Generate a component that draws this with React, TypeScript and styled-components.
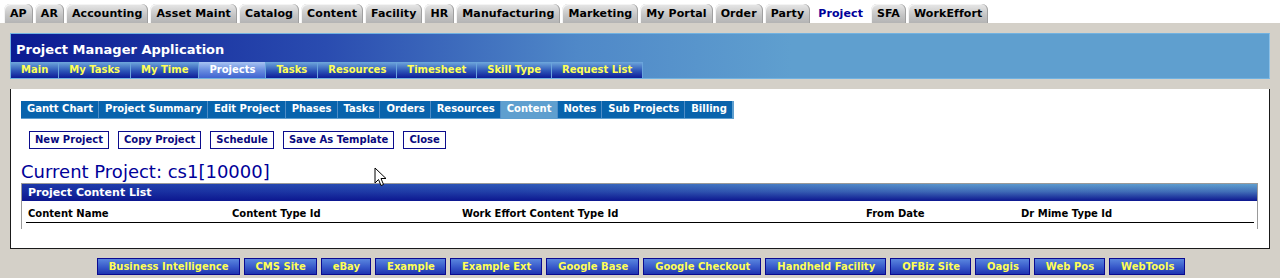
import React from 'react'
import styled, { createGlobalStyle } from 'styled-components'

const appTabs = [
  'AP', 'AR', 'Accounting', 'Asset Maint', 'Catalog', 'Content', 'Facility', 'HR',
  'Manufacturing', 'Marketing', 'My Portal', 'Order', 'Party', 'Project', 'SFA', 'WorkEffort',
]
const mainNav = ['Main', 'My Tasks', 'My Time', 'Projects', 'Tasks', 'Resources', 'Timesheet', 'Skill Type', 'Request List']
const subTabs = [
  'Gantt Chart', 'Project Summary', 'Edit Project', 'Phases', 'Tasks', 'Orders',
  'Resources', 'Content', 'Notes', 'Sub Projects', 'Billing',
]
const actions = ['New Project', 'Copy Project', 'Schedule', 'Save As Template', 'Close']
const columns = ['Content Name', 'Content Type Id', 'Work Effort Content Type Id', 'From Date', 'Dr Mime Type Id']
const footerLinks = [
  'Business Intelligence', 'CMS Site', 'eBay', 'Example', 'Example Ext', 'Google Base',
  'Google Checkout', 'Handheld Facility', 'OFBiz Site', 'Oagis', 'Web Pos', 'WebTools',
]

const GlobalStyle = createGlobalStyle`
  html, body {
    margin: 0;
    padding: 0;
    background: #d4d0c8;
    font-family: "DejaVu Sans", Verdana, sans-serif;
    overflow: hidden;
  }
`

const Page = styled.div`
  position: relative;
  width: 1280px;
  height: 278px;
`

const TabBar = styled.div`
  display: flex;
  align-items: flex-end;
  height: 23px;
  padding-left: 4px;
  background: #ffffff;
`

const AppTab = styled.div<{ $active?: boolean }>`
  height: 19px;
  line-height: 20px;
  padding: 0 6px;
  margin-right: 2px;
  font-size: 11px;
  font-weight: bold;
  letter-spacing: 0.1px;
  white-space: nowrap;
  border-radius: 6px 6px 0 0;
  color: ${(p) => (p.$active ? '#000099' : '#000000')};
  background: ${(p) => (p.$active ? '#ffffff' : 'linear-gradient(to bottom, #e8e8e8, #c4c4c4 60%, #b4b4b4)')};
  box-shadow: ${(p) => (p.$active ? 'none' : 'inset -1px 0 0 #a0a0a0, inset 1px 1px 0 #f4f4f4')};
`

const Body = styled.div`
  padding: 10px 10px 0;
`

const Header = styled.div`
  border: 1px solid #72b2e0;
  border-right-color: #8cc0e6;
  background: linear-gradient(to right, #0b1a92 0%, #2a4cb0 25%, #4f88c8 45%, #5f9fcf 62%, #5f9fcf 100%);
`

const Title = styled.div`
  height: 28px;
  line-height: 31px;
  padding-left: 5px;
  color: #ffffff;
  font-size: 13px;
  font-weight: bold;
`

const NavRow = styled.div`
  display: flex;
  height: 16px;
`

const NavItem = styled.div<{ $active?: boolean }>`
  padding: 0 10px;
  line-height: 16px;
  font-size: 10px;
  font-weight: bold;
  white-space: nowrap;
  border-right: 1px solid #6aa4dc;
  color: ${(p) => (p.$active ? '#ffffff' : '#ffff55')};
  background: ${(p) =>
    p.$active
      ? 'linear-gradient(to bottom, #a8c4f2, #6a8ee0 50%, #3f62d0)'
      : 'linear-gradient(to bottom, #6fa8dc, #2d56b8 55%, #0d1b98)'};
`

const ContentBox = styled.div`
  margin-top: 10px;
  height: 147px;
  padding: 12px 11px 0 10px;
  background: #ffffff;
  border: 1px solid #1a1a1a;
  border-top: none;
`

const SubTabBar = styled.div`
  display: flex;
  width: fit-content;
  height: 17px;
  background: #0863ac;
  border-right: 2px solid #5f9fcf;
  border-bottom: 1px solid #5f9fcf;
`

const SubTab = styled.div<{ $active?: boolean }>`
  padding: 0 5px 0 6px;
  line-height: 16px;
  font-size: 10px;
  font-weight: bold;
  white-space: nowrap;
  color: #ffffff;
  background: ${(p) => (p.$active ? '#5f9fcf' : 'transparent')};
  border-left: 1px solid #4e8cc6;
  &:first-child {
    border-left: none;
  }
`

const ButtonRow = styled.div`
  display: flex;
  gap: 9px;
  margin: 12px 0 0 8px;
`

const ActionButton = styled.div`
  height: 16px;
  line-height: 16px;
  padding: 0 5px;
  font-size: 10px;
  font-weight: bold;
  color: #0a0a80;
  border: 1px solid #0c0c8c;
  white-space: nowrap;
`

const ProjectTitle = styled.div`
  margin-top: 12px;
  height: 22px;
  line-height: 22px;
  font-size: 18px;
  color: #000099;
  white-space: nowrap;
`

const ListBox = styled.div`
  border: 1px solid #9a9a9a;
  border-bottom: none;
  height: 45px;
`

const ListHeader = styled.div`
  height: 17px;
  line-height: 17px;
  padding-left: 6px;
  font-size: 11px;
  font-weight: bold;
  color: #ffffff;
  background: linear-gradient(to bottom, rgba(10, 20, 140, 0) 0%, rgba(10, 20, 140, 0.35) 45%, #0c168f 100%),
    linear-gradient(to right, #1c36a8 0%, #2e58b8 40%, #5a96cc 75%, #5f9fcf 100%);
`

const ColumnRow = styled.div`
  display: grid;
  grid-template-columns: 204px 230px 404px 155px 1fr;
  margin: 5px 3px 0 4px;
  padding-left: 2px;
  height: 16px;
  line-height: 16px;
  font-size: 10px;
  font-weight: bold;
  color: #000000;
  border-bottom: 1px solid #000000;
`

const Footer = styled.div`
  display: flex;
  justify-content: center;
  gap: 4px;
  padding: 9px 0 0 2px;
`

const FooterLink = styled.div`
  height: 15px;
  line-height: 15px;
  padding: 0 10px 0 11px;
  font-size: 10px;
  font-weight: bold;
  color: #ffff55;
  white-space: nowrap;
  border: 1px solid #0a0a90;
  background: linear-gradient(to bottom, #5a86de, #3a5ccc 50%, #1e34b0);
`

const Cursor = styled.svg`
  position: absolute;
  left: 374px;
  top: 167px;
  width: 13px;
  height: 20px;
`

const App: React.FC = () => {
  return (
    <Page>
      <GlobalStyle />
      <TabBar>
        {appTabs.map((t) => (
          <AppTab key={t} $active={t === 'Project'}>
            {t}
          </AppTab>
        ))}
      </TabBar>
      <Body>
        <Header>
          <Title>Project Manager Application</Title>
          <NavRow>
            {mainNav.map((n) => (
              <NavItem key={n} $active={n === 'Projects'}>
                {n}
              </NavItem>
            ))}
          </NavRow>
        </Header>
        <ContentBox>
          <SubTabBar>
            {subTabs.map((s) => (
              <SubTab key={s} $active={s === 'Content'}>
                {s}
              </SubTab>
            ))}
          </SubTabBar>
          <ButtonRow>
            {actions.map((a) => (
              <ActionButton key={a}>{a}</ActionButton>
            ))}
          </ButtonRow>
          <ProjectTitle>Current Project: cs1[10000]</ProjectTitle>
          <ListBox>
            <ListHeader>Project Content List</ListHeader>
            <ColumnRow>
              {columns.map((c) => (
                <div key={c}>{c}</div>
              ))}
            </ColumnRow>
          </ListBox>
        </ContentBox>
      </Body>
      <Footer>
        {footerLinks.map((f) => (
          <FooterLink key={f}>{f}</FooterLink>
        ))}
      </Footer>
      {/* mouse pointer */}
      <Cursor viewBox="0 0 13 20">
        <path d="M1 1 L1 16 L4.5 12.5 L7 18.5 L9.5 17.5 L7 11.5 L12 11.5 Z" fill="#ffffff" stroke="#000000" strokeWidth="1" strokeLinejoin="miter" />
      </Cursor>
    </Page>
  )
}

export default App
